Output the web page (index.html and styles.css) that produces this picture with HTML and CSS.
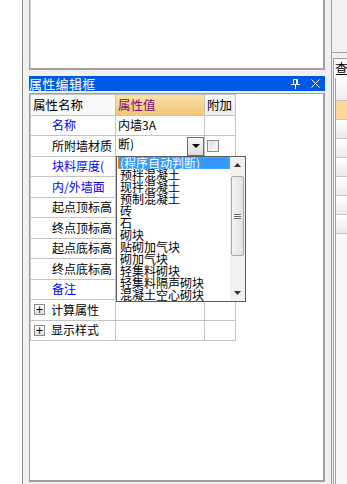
FILE: index.html
```html
<!DOCTYPE html>
<html>
<head>
<meta charset="utf-8">
<link rel="stylesheet" href="styles.css">
</head>
<body>
<div class="app">
  <div class="gutter"></div>
  <div class="center">
    <div class="top-panel"></div>
    <div class="titlebar">
      <span class="title">属性编辑框</span>
      <span class="tb-icons">
        <svg class="pin" width="9" height="10" viewBox="0 0 9 10"><path d="M2.5 0.5h4v5h-4z M5.5 0.5v5" fill="none" stroke="#fff" stroke-width="1"/><path d="M0 5.5h9 M4.5 5.5v4.5" stroke="#fff" stroke-width="1"/></svg>
        <svg class="close" width="9" height="9" viewBox="0 0 9 9"><path d="M0.5 0.5l8 8 M8.5 0.5l-8 8" stroke="#fff" stroke-width="1"/></svg>
      </span>
    </div>
    <div class="panel">
      <div class="grid">
        <div class="cell hdr hdr-name">属性名称</div>
        <div class="cell hdr hdr-val">属性值</div>
        <div class="cell hdr hdr-add">附加</div>

        <div class="cell lbl blue">名称</div>
        <div class="cell val">内墙3A</div>
        <div class="cell"></div>

        <div class="cell lbl">所附墙材质</div>
        <div class="cell val combo"><span>断)</span><span class="dd-btn"><svg width="8" height="5" viewBox="0 0 8 5"><path d="M0 0h8l-4 4z" fill="#000"/></svg></span></div>
        <div class="cell add"><span class="chk"></span></div>

        <div class="cell lbl blue">块料厚度(</div>
        <div class="cell val"></div>
        <div class="cell"></div>

        <div class="cell lbl blue">内/外墙面</div>
        <div class="cell val"></div>
        <div class="cell"></div>

        <div class="cell lbl">起点顶标高</div>
        <div class="cell val"></div>
        <div class="cell"></div>

        <div class="cell lbl">终点顶标高</div>
        <div class="cell val"></div>
        <div class="cell"></div>

        <div class="cell lbl">起点底标高</div>
        <div class="cell val"></div>
        <div class="cell"></div>

        <div class="cell lbl">终点底标高</div>
        <div class="cell val"></div>
        <div class="cell"></div>

        <div class="cell lbl blue">备注</div>
        <div class="cell val"></div>
        <div class="cell"></div>

        <div class="cell grp"><span class="plus">+</span>计算属性</div>
        <div class="cell val"></div>
        <div class="cell"></div>

        <div class="cell grp"><span class="plus">+</span>显示样式</div>
        <div class="cell val"></div>
        <div class="cell"></div>
      </div>

      <div class="dropdown">
        <div class="items">
          <div class="item sel">(程序自动判断)</div>
          <div class="item">预拌混凝土</div>
          <div class="item">现拌混凝土</div>
          <div class="item">预制混凝土</div>
          <div class="item">砖</div>
          <div class="item">石</div>
          <div class="item">砌块</div>
          <div class="item">贴砌加气块</div>
          <div class="item">砌加气块</div>
          <div class="item">轻集料砌块</div>
          <div class="item">轻集料隔声砌块</div>
          <div class="item">混凝土空心砌块</div>
        </div>
        <div class="scroll">
          <div class="arrow"><svg width="7" height="4" viewBox="0 0 7 4"><path d="M0 4h7l-3.5-4z" fill="#333"/></svg></div>
          <div class="thumb"><span class="grip"></span></div>
          <div class="arrow"><svg width="7" height="4" viewBox="0 0 7 4"><path d="M0 0h7l-3.5 4z" fill="#333"/></svg></div>
        </div>
      </div>
    </div>
  </div>
  <div class="right">
    <div class="right-top"></div>
    <div class="tab">查</div>
    <div class="rlist">
      <div class="rrow first"></div>
      <div class="rrow hl"></div>
      <div class="rrow"></div>
      <div class="rrow"></div>
      <div class="rrow"></div>
      <div class="rrow"></div>
      <div class="rrow"></div>
      <div class="rrow"></div>
    </div>
  </div>
</div>
</body>
</html>
```

FILE: styles.css
```css
* { box-sizing: border-box; }
html, body { margin: 0; padding: 0; }
body {
  width: 347px;
  height: 484px;
  overflow: hidden;
  background: #fff;
  font-family: "Noto Sans CJK SC", "Liberation Sans", sans-serif;
  font-size: 12px;
  color: #000;
}
.app {
  display: flex;
  width: 347px;
  height: 484px;
}
.gutter {
  width: 23px;
  background: #fff;
  border-right: 1px solid #8c8c8c;
}
.center {
  width: 308px;
  background: #f0f0f0;
  padding: 0 6px;
  display: flex;
  flex-direction: column;
}
.top-panel {
  height: 70px;
  background: #fff;
  border-left: 1px solid #a0a0a0;
  border-right: 2px solid #a0a0a0;
  border-bottom: 2px solid #a0a0a0;
  box-shadow: inset 1px 0 #d4d4d4;
}
.titlebar {
  margin-top: 6px;
  height: 15px;
  background: #0058e6;
  color: #fff;
  display: flex;
  align-items: center;
  justify-content: space-between;
}
.title {
  font-size: 13px;
  line-height: 15px;
  letter-spacing: 0.3px;
}
.tb-icons {
  display: flex;
  align-items: center;
  gap: 11px;
  padding-right: 5px;
}
.pin, .close { display: block; }
.panel {
  position: relative;
  margin-top: 2px;
  margin-bottom: 2px;
  flex: 1;
  background: #fff;
  border-top: 1px solid #a0a0a0;
  border-left: 1px solid #a0a0a0;
  border-right: 2px solid #a0a0a0;
  border-bottom: 2px solid #a0a0a0;
}
.grid {
  display: grid;
  grid-template-columns: 85px 89px 31px;
  grid-auto-rows: 20.5px;
  width: 206px;
  border-top: 1px solid #c4c4c4;
  border-left: 1px solid #c4c4c4;
}
.cell {
  border-right: 1px solid #c4c4c4;
  border-bottom: 1px solid #c4c4c4;
  display: flex;
  align-items: center;
  line-height: 14px;
  white-space: nowrap;
  overflow: hidden;
}
.hdr { padding-left: 2px; font-size: 12.5px; }
.hdr-name { background: #f9f9f9; }
.hdr-val {
  background: linear-gradient(#fbe1a9, #f1c677);
  color: #7a0a6e;
}
.hdr-add { background: linear-gradient(#f8f8f8, #ececec); }
.lbl { padding-left: 21px; }
.blue { color: #0000ff; }
.val { padding-left: 2px; }
.combo {
  justify-content: space-between;
  align-items: flex-start;
  padding-top: 1px;
  padding-right: 0;
}
.dd-btn {
  width: 17px;
  height: 19px;
  border: 1px solid #6a6a6a;
  background: linear-gradient(#fafafa, #dcdcdc);
  display: flex;
  align-items: center;
  justify-content: center;
}
.dd-btn svg { display: block; }
.add { padding-left: 2px; }
.chk {
  width: 12px;
  height: 12px;
  border: 1px solid #8a8a8a;
  background: linear-gradient(135deg, #d8d8d8, #ffffff);
  box-shadow: inset 0 0 0 1px #f4f4f4;
}
.grp { padding-left: 2px; gap: 6px; }
.plus {
  width: 11px;
  height: 11px;
  border: 1px solid #8a8a8a;
  background: linear-gradient(#ffffff, #dedede);
  font-family: "DejaVu Sans", sans-serif;
  font-size: 10px;
  line-height: 9px;
  text-align: center;
  margin-left: 1px;
}
.dropdown {
  position: absolute;
  left: 86px;
  top: 62px;
  width: 130px;
  height: 146px;
  background: #fff;
  border: 1px solid #5a5a5a;
  display: flex;
}
.items {
  flex: 1;
  padding-left: 1px;
}
.item {
  height: 12px;
  line-height: 12px;
  padding-left: 2px;
  white-space: nowrap;
}
.item.sel {
  background: #3399ff;
  color: #fff;
  outline: 1px dotted #ff8c00;
  outline-offset: -1px;
}
.scroll {
  width: 15px;
  background: #f0f0f0;
  display: flex;
  flex-direction: column;
  justify-content: space-between;
  padding: 0 1px;
}
.arrow {
  height: 16px;
  display: flex;
  align-items: center;
  justify-content: center;
}
.arrow svg { display: block; }
.thumb {
  height: 80px;
  margin-top: 3px;
  margin-bottom: auto;
  border: 1px solid #a8a8a8;
  border-radius: 2px;
  background: linear-gradient(90deg, #f4f4f4, #e2e2e2);
  display: flex;
  align-items: center;
  justify-content: center;
}
.grip {
  width: 7px;
  height: 5px;
  border-top: 1px solid #666;
  border-bottom: 1px solid #666;
  background: linear-gradient(#fff 0 1px, #666 1px 2px, #fff 2px);
}
.right {
  width: 16px;
  background: #f0f0f0;
  border-left: 1px solid #a0a0a0;
  display: flex;
  flex-direction: column;
}
.right-top {
  height: 53px;
  border-bottom: 1px solid #a0a0a0;
}
.tab {
  margin-top: 5px;
  margin-left: 1px;
  height: 20px;
  background: #fafafa;
  border-left: 1px solid #a0a0a0;
  border-top: 1px solid #a0a0a0;
  font-size: 13px;
  line-height: 18px;
  padding-left: 1px;
  white-space: nowrap;
  overflow: hidden;
}
.rlist {
  flex: 1;
  margin-left: 1px;
  background: #f8f8f8;
  border-left: 1px solid #a0a0a0;
  box-shadow: inset 1px 0 #fff, inset 2px 0 #a0a0a0;
  padding-left: 2px;
}
.rrow {
  height: 19px;
  background: linear-gradient(#ffffff, #ebebeb);
  border-bottom: 1px solid #c8c8c8;
}
.rrow.first { height: 23px; }
.rrow.hl { background: #fdd898; }
```
